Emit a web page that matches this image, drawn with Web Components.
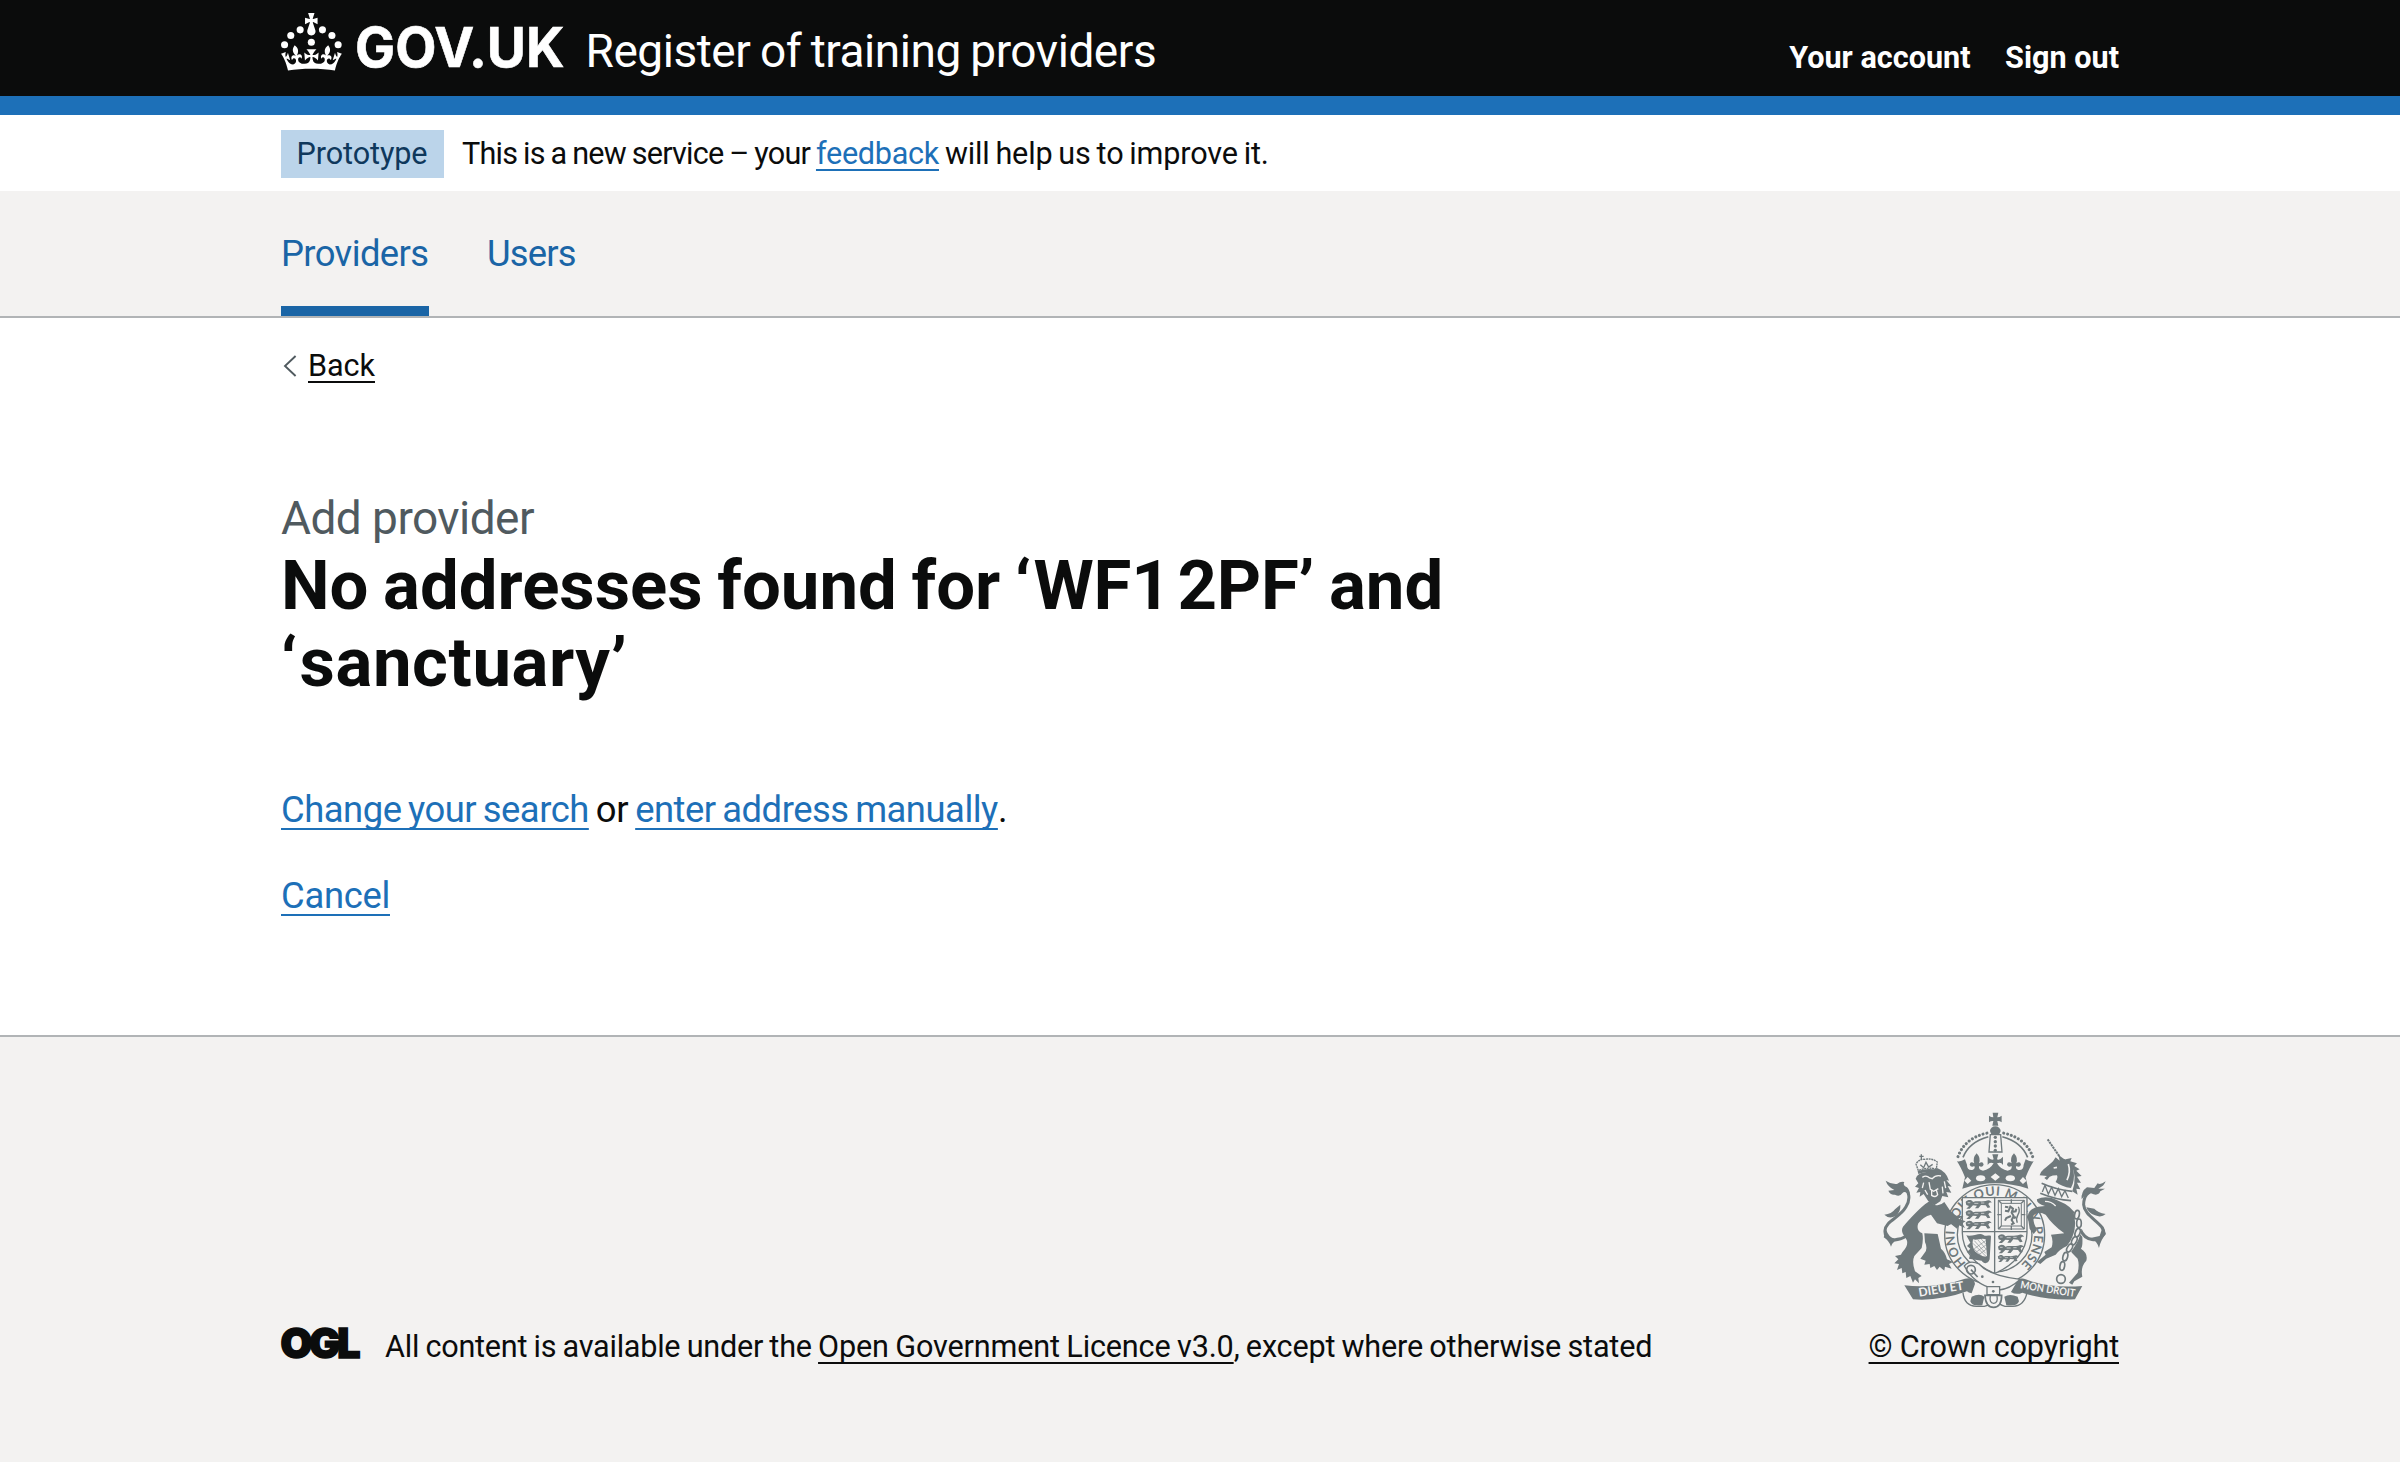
<!DOCTYPE html>
<html lang="en">
<head>
<meta charset="utf-8">
<title>No addresses found - Register of training providers - GOV.UK</title>
<style>
  html { background: #f3f2f1; }
  body { margin: 0; background: #fff; color: #0b0c0c; font-family: Roboto, "Liberation Sans", sans-serif; font-size: 36.4px; line-height: 48px; }
</style>
</head>
<body>
<app-page></app-page>
<script>
const base = `
  * { box-sizing: border-box; }
  .width { width: 1838px; margin: 0 auto; }
  a { color: inherit; text-decoration: underline; text-decoration-thickness: 2px; text-underline-offset: 5px; text-decoration-skip-ink: none; }
  span, a { white-space: pre; }
`;
function define(name, css, html) {
  const template = document.createElement('template');
  template.innerHTML = `<style>${base}${css}</style>${html}`;
  customElements.define(name, class extends HTMLElement {
    constructor() {
      super();
      this.attachShadow({ mode: 'open' }).append(template.content.cloneNode(true));
    }
  });
}

define('govuk-logo', `
  :host { display: block; width: 285px; height: 58px; }
  svg { display: block; overflow: visible; }
  text { font: 700 55px Inter, "Liberation Sans", sans-serif; }
`, `
<svg width="285" height="57.4" viewBox="0 0 285 57.4" fill="#fff">
  <g transform="scale(.957)">
    <circle cx="20" cy="17.6" r="3.7"/><circle cx="10.2" cy="23.5" r="3.7"/><circle cx="3.7" cy="33.2" r="3.7"/>
    <circle cx="31.7" cy="30.6" r="3.7"/><circle cx="43.3" cy="17.6" r="3.7"/><circle cx="53.2" cy="23.5" r="3.7"/><circle cx="59.7" cy="33.2" r="3.7"/>
    <path d="M33.1,9.8c.2-.1.3-.3.5-.5l4.6,2.4v-6.8l-4.6,1.5c-.1-.2-.3-.3-.5-.5l1.9-5.9h-6.7l1.9,5.9c-.2.1-.3.3-.5.5l-4.6-1.5v6.8l4.6-2.4c.1.2.3.3.5.5l-2.6,8c-.9,2.8,1.2,5.7,4.1,5.7h0c3,0,5.1-2.9,4.1-5.7l-2.6-8ZM37,37.9s-3.4,3.8-4.1,6.1c2.2,0,4.2-.5,6.4-2.8l-.7,8.5c-2-2.8-4.4-4.1-5.7-3.8.1,3.1.5,6.7,5.8,7.2,3.7.3,6.7-1.5,7-3.8.4-2.6-2-4.3-3.7-1.6-1.4-4.5,2.4-6.1,4.9-3.2-1.9-4.5-1.8-7.7,2.4-10.9,3,4,2.6,7.3-1.2,11.1,2.4-1.3,6.2,0,4,4.6-1.2-2.8-3.7-2.2-4.2.2-.3,1.7.7,3.7,3,4.2,1.9.3,4.7-.9,7-5.9-1.3,0-2.4.7-3.9,1.7l2.4-8c.6,2.3,1.4,3.7,2.2,4.5.6-1.6.5-2.8,0-5.3l5,1.8c-2.6,3.6-5.2,8.7-7.3,17.5-7.4-1.1-15.7-1.7-24.5-1.7h0c-8.8,0-17.1.6-24.5,1.7-2.1-8.9-4.7-13.9-7.3-17.5l5-1.8c-.5,2.5-.6,3.7,0,5.3.8-.8,1.6-2.3,2.2-4.5l2.4,8c-1.5-1-2.6-1.7-3.9-1.7,2.3,5,5.2,6.2,7,5.9,2.3-.4,3.3-2.4,3-4.2-.5-2.4-3-3.1-4.2-.2-2.2-4.6,1.6-6,4-4.6-3.7-3.7-4.2-7.1-1.2-11.1,4.2,3.2,4.3,6.4,2.4,10.9,2.5-2.8,6.3-1.3,4.9,3.2-1.8-2.7-4.1-1-3.7,1.6.3,2.3,3.3,4.1,7,3.8,5.4-.5,5.7-4.2,5.8-7.2-1.3-.2-3.7,1-5.7,3.8l-.7-8.5c2.2,2.3,4.2,2.7,6.4,2.8-.7-2.3-4.1-6.1-4.1-6.1h10.6,0Z"/>
  </g>
  <text x="74" y="53.6" textLength="209.5" lengthAdjust="spacingAndGlyphs" stroke="#fff" stroke-width=".6">GOV.UK</text>
</svg>`);

define('app-header', `
  :host { display: block; height: 115px; background: #0b0c0c; border-bottom: 19px solid #1d70b8; color: #fff; }
  .width { display: flex; align-items: flex-start; }
  govuk-logo { margin-top: 13px; }
  .service { margin: 23px auto 0 19.5px; font-size: 46px; line-height: 57px; letter-spacing: -.45px; word-spacing: -1.5px; }
  nav { display: flex; gap: 34.5px; margin-top: 38px; font-weight: 700; font-size: 30.6px; line-height: 40px; letter-spacing: 0; }
`, `
<div class="width">
  <govuk-logo></govuk-logo>
  <span class="service">Register of training providers</span>
  <nav><span>Your account</span><span>Sign out</span></nav>
</div>`);

define('phase-banner', `
  :host { display: block; height: 76px; padding-top: 15px; font-size: 30.6px; line-height: 40px; }
  .width { display: flex; align-items: flex-start; }
  .tag { width: 162.5px; height: 48px; padding: 4px 0 0 15.5px; background: #bbd4ea; color: #0f385c; letter-spacing: -.1px; }
  p { margin: 4px 0 0 18.5px; }
  a { color: #1d70b8; letter-spacing: -.29px; }
`, `
<div class="width"><span class="tag">Prototype</span>
<p><span style="letter-spacing:-.78px;word-spacing:-1px">This is a new service – your </span><a>feedback</a><span style="letter-spacing:-.17px;word-spacing:-1.5px"> will help us to improve it.</span></p></div>`);

define('service-nav', `
  :host { display: block; height: 127px; background: #f3f2f1; border-bottom: 2px solid #b1b4b6; color: #1a65a6; }
  .width { display: flex; gap: 58px; height: 125px; }
  span { padding-top: 39px; height: 125px; letter-spacing: -.6px; }
  .current { width: 148px; border-bottom: 10px solid #1a65a6; }
`, `<div class="width"><span class="current">Providers</span><span style="letter-spacing:-.8px">Users</span></div>`);

define('back-link', `
  :host { display: flex; align-items: center; height: 40px; font-size: 30.6px; line-height: 40px; letter-spacing: -.06px; }
  svg { display: block; margin: 0 11px 0 2px; }
`, `<svg width="14" height="22" viewBox="0 0 14 22"><path d="M12.6 1 2 11 12.6 21" fill="none" stroke="#505a5f" stroke-width="1.9"/></svg><a>Back</a>`);

define('page-content', `
  :host { display: block; height: 717px; padding-top: 28px; }
  back-link { margin-bottom: 104px; }
  .caption { display: block; color: #505a5f; font-size: 46px; line-height: 57px; letter-spacing: -.55px; }
  h1 { margin: 0 0 85px; font-size: 68.9px; line-height: 77px; font-weight: 700; letter-spacing: 0; word-spacing: -2.5px; }
  .open { letter-spacing: 2.5px; }
  .gap { letter-spacing: -.2px; word-spacing: -10px; }
  p { margin: 0 0 38px; }
  p a { color: #1d70b8; text-underline-offset: 6px; letter-spacing: -.48px; word-spacing: -2px; }
`, `
<div class="width">
  <back-link></back-link>
  <span class="caption">Add provider</span>
  <h1>No addresses found for <span class="open">‘</span><span class="gap">WF1 2PF</span>’ and<br><span class="open">‘</span><span style="letter-spacing:.55px">sanctuary’</span></h1>
  <p><a>Change your search</a><span style="letter-spacing:-.35px;word-spacing:-1.7px"> or </span><a>enter address manually</a>.</p>
  <p><a style="letter-spacing:-.3px">Cancel</a></p>
</div>`);

define('ogl-logo', `
  :host { display: block; width: 79px; height: 33px; }
  svg { display: block; overflow: visible; }
  text { font: 900 41px Inter, "Liberation Sans", sans-serif; }
`, `<svg width="79" height="33" viewBox="0 0 79 33"><text x="-0.5" y="31" textLength="80" lengthAdjust="spacing" fill="#0b0c0c" stroke="#0b0c0c" stroke-width="1.6">OGL</text></svg>`);

define('royal-arms', `
  :host { display: block; width: 223.3px; height: 196.7px; }
  svg { display: block; }
  text { font-family: Lato, "Liberation Sans", sans-serif; }
`, `
<svg width="223.3" height="196.7" viewBox="100 38 670 590" fill="#6f797c" stroke="none">
  <defs>
    <path id="garter" d="M350 492 A119 119 0 1 1 518 492"/>
    <g id="passant">
      <path d="M2 6 C8-2 20-2 24 6 C36 2 50 6 62 3 C72-2 78 2 80 8 C74 6 72 8 70 12 L76 22 L68 24 L62 16 L48 15 L40 25 L30 25 L36 17 L24 16 L14 26 L4 26 L12 18 L4 15 Z"/>
      <path d="M8 8h8M28 10h12M48 9h10" stroke="#f3f2f1" stroke-width="2"/>
    </g>
    <g id="link"><ellipse rx="7" ry="13" fill="none" stroke="#6f797c" stroke-width="5"/></g>
  </defs>

  <!-- garter and shield -->
  <circle cx="435" cy="406" r="150" fill="#f3f2f1" stroke="#6f797c" stroke-width="4"/>
  <circle cx="435" cy="406" r="112" fill="none" stroke="#6f797c" stroke-width="4"/>
  <text font-size="38" font-weight="700"><textPath href="#garter" textLength="566" lengthAdjust="spacing">HONI SOIT QUI MAL Y PENSE</textPath></text>
  <path d="M338 295H532V400C532 455 490 500 435 522C380 500 338 455 338 400Z" fill="#f3f2f1" stroke="#6f797c" stroke-width="4"/>
  <path d="M433 295h4v227h-4zM338 395h194v4H338z"/>
  <use href="#passant" x="346" y="302"/><use href="#passant" x="346" y="333"/><use href="#passant" x="346" y="364"/>
  <g transform="translate(443 405)"><use href="#passant"/><use href="#passant" y="31"/><use href="#passant" transform="translate(0 62) scale(.8)"/></g>
  <path d="M446 303h78v86h-78zM455 312h60v68h-60z" fill="none" stroke="#6f797c" stroke-width="3"/>
  <path d="M446 303l9 9M524 303l-9 9M446 389l9-9M524 389l-9-9M485 300v12M485 380v12M443 346h12M515 346h12" stroke="#6f797c" stroke-width="4"/>
  <path d="M466 322l10 2M466 334l10 2 6-14 8 6-4 12 6 10-6 12 6 10-8 4M484 350l-14 6-4 8M486 338l12-2 2-8M492 356l8-2" fill="none" stroke="#6f797c" stroke-width="6"/>
  <path d="M506 322q6 12-1 24t-2 24" fill="none" stroke="#6f797c" stroke-width="4"/>
  <path d="M350 408C366 414 390 398 400 406C410 414 424 404 424 412L420 480C415 495 402 494 396 484L358 478L362 464L352 458L362 448L352 440L362 430Z"/>
  <path d="M370 420C384 424 396 414 408 420L412 470C400 476 388 466 376 456C368 444 368 432 370 420Z" fill="#f3f2f1"/>
  <path d="M374 424l34 38M384 421l26 29M394 418l16 18M370 432l38 38M372 448l26 24M408 424l-34 24M410 436l-30 22M412 448l-24 18" stroke="#6f797c" stroke-width="1.6"/>

  <!-- crown over the shield -->
  <path d="M429 40h17l-3 14q7 0 13-5v20q-6-5-13-4l3 14h-18l3-14q-7-1-13 4V49q6 5 13 5z"/>
  <path d="M421 95a16 14 0 0 1 32 0l-4 10h-24z"/>
  <path d="M422 106h31l4 52h-39z" fill="#f3f2f1" stroke="#6f797c" stroke-width="4"/>
  <g fill="#6f797c"><circle cx="437" cy="114" r="5"/><circle cx="437" cy="127" r="5"/><circle cx="437" cy="140" r="5"/><circle cx="437" cy="153" r="5"/></g>
  <path d="M325 172Q345 116 413 101M549 172Q529 116 461 101" fill="none" stroke="#6f797c" stroke-width="9" stroke-linecap="round" stroke-dasharray=".1 11.6"/>
  <path d="M340 174Q358 128 416 112M534 174Q516 128 458 112" fill="none" stroke="#6f797c" stroke-width="5"/>
  <path d="M322 186Q334 188 346 180L352 196Q352 214 368 212Q378 208 374 200Q364 206 360 196Q362 184 374 192Q368 176 381 162Q394 176 388 192Q400 184 402 196Q398 206 388 200Q386 212 400 214Q420 212 432 192Q420 186 414 197V172Q424 184 432 180L428 165H446L442 180Q450 184 460 172V197Q454 186 442 192Q454 212 474 214Q488 212 486 200Q476 206 472 196Q474 184 486 192Q480 176 493 162Q506 176 500 192Q512 184 514 196Q510 206 500 200Q496 208 506 212Q522 214 522 196L528 180Q540 188 552 186Q540 204 528 234L536 268Q437 235 338 268L346 234Q334 204 322 186Z"/>
  <g fill="#f3f2f1"><ellipse cx="393" cy="237" rx="14" ry="9"/><ellipse cx="482" cy="237" rx="14" ry="9"/><path d="M437 222l14 11-14 11-14-11zM354 233l11 11-11 10-10-10zM520 233l11 11-11 10-10-10z"/></g>

  <!-- lion -->
  <path d="M204 216Q230 204 262 212L254 220Q230 214 206 224Z"/>
  <path d="M206 214L199 194Q208 178 226 180Q248 176 263 188L260 209Q232 202 206 214Z" fill="none" stroke="#6f797c" stroke-width="4" stroke-dasharray="6 2"/>
  <path d="M215 165v16M209 171h13M212 196l10 9 7-16 8 14 12-8" fill="none" stroke="#6f797c" stroke-width="4"/>
  <path d="M198 238Q206 216 236 218L262 206Q290 216 298 244L290 242L306 262L294 260L305 280L290 278L296 294L278 290L272 306L254 318L236 306L222 284L210 292L212 278L200 280L208 266L196 262L206 252Z"/>
  <path d="M218 234q12-8 22 2l8 2q10-12 26-8M238 248l4 22 10 6 14-8M246 270v18q12 8 18-2l-4-14M222 250l-4 16M284 246l4 20M278 262l2 20M226 272l8 14" fill="none" stroke="#f3f2f1" stroke-width="4"/>
  <path d="M240 306Q216 318 160 382C150 400 168 412 172 424C176 444 160 452 154 466L136 470L146 480L134 492L148 494L142 512L156 506L158 522L168 518L170 536L182 530L190 550L196 540L208 552L206 536L216 530L196 516Q186 488 194 470L216 446Q222 420 218 402Q198 392 206 372Q220 352 244 346L262 372L294 380L304 374L322 388L328 378L346 386L338 372L348 366L326 358L342 350L320 350L300 332L284 308Q270 322 254 316Z"/>
  <path d="M224 402L264 404Q270 430 274 448Q288 460 292 480L310 488L298 494L306 508L286 502L284 514L270 502L262 512L254 500L242 506L240 494L224 496L228 484L212 478L224 462Q236 450 226 428Z"/>
  <path d="M170 410C136 432 104 420 106 394C108 364 150 356 168 324C184 300 180 272 158 264" fill="none" stroke="#6f797c" stroke-width="9"/>
  <path d="M108 244Q126 256 142 254Q154 244 164 248Q158 258 172 264Q182 274 180 288Q166 272 158 282Q150 294 136 286Q122 288 116 274L134 272Q114 262 108 244ZM152 316Q154 336 138 350Q118 360 104 346Q126 344 136 330ZM124 442Q118 424 102 414L110 392Q116 412 134 418Q148 412 156 416Q130 422 124 442Z"/>

  <!-- unicorn -->
  <path d="M594 120L630 172" stroke="#6f797c" stroke-width="6" stroke-dasharray="7 2"/>
  <path d="M582 210Q602 194 610 186L618 174L630 184L626 166L642 178Q668 182 672 214Q676 244 664 266Q636 262 618 248Q626 234 622 228Q608 228 600 232L592 242L584 236L592 230L570 228Q572 218 582 210Z"/>
  <path d="M612 206l10-2M656 194q8 24-4 48" stroke="#f3f2f1" fill="none" stroke-width="5"/>
  <path d="M648 180L666 176L662 186L682 192L674 200L690 210L680 214L696 230L682 232L694 250L682 250L692 270L680 268L684 286L668 276Q684 230 664 196Z"/>
  <path d="M576 252Q620 272 668 276M572 282Q620 302 664 304" fill="none" stroke="#6f797c" stroke-width="5"/>
  <path d="M578 278l8-20 10 26 10-20 10 24 10-20 10 24 10-18 10 22" fill="none" stroke="#6f797c" stroke-width="4"/>
  <path d="M562 300Q590 286 626 304Q668 320 682 352Q690 376 684 396L698 412Q700 440 694 448Q716 462 710 484Q692 502 698 532L674 546L668 556L658 550L684 520Q690 496 684 478Q666 462 652 440Q630 450 618 466L590 478L572 494L562 488L588 466L584 458L606 444Q612 424 604 406L644 402Q608 376 588 346Q566 334 552 348Q550 362 554 374L562 392L552 404L540 388L534 350Q538 328 566 322L586 320Q560 312 562 300Z"/>
  <path d="M586 306Q606 306 618 320" fill="none" stroke="#f3f2f1" stroke-width="4"/>
  <path d="M692 390C706 426 748 430 762 404C768 372 704 354 702 316C702 286 718 278 732 270" fill="none" stroke="#6f797c" stroke-width="9"/>
  <path d="M768 246Q752 258 744 252L734 266L712 264Q694 276 696 300Q708 282 724 282Q746 292 752 276L766 268L746 268Q764 260 768 246ZM710 324Q716 342 736 348Q756 356 768 344Q744 340 734 328ZM760 380L769 404Q754 420 748 446Q742 424 722 416L750 410Z"/>
  <path d="M682 340Q696 396 664 440T636 506" fill="none" stroke="#f3f2f1" stroke-width="20"/>
  <g><use href="#link" transform="translate(682 346) rotate(10)"/><use href="#link" transform="translate(688 372)"/><use href="#link" transform="translate(684 400) rotate(20)"/><use href="#link" transform="translate(674 424) rotate(25)"/><use href="#link" transform="translate(660 446) rotate(30)"/><use href="#link" transform="translate(647 472) rotate(15)"/><use href="#link" transform="translate(638 500) rotate(10)"/></g>
  <circle cx="634" cy="539" r="13" fill="none" stroke="#6f797c" stroke-width="5"/>

  <!-- motto ribbon -->
  <path d="M164 558Q260 568 346 538Q374 532 376 554L366 582Q356 580 352 576Q270 606 190 600Z"/>
  <path d="M698 560Q600 568 528 540Q508 532 498 554L484 578Q500 588 518 580Q590 604 676 600Z"/>
  <g fill="#f3f2f1" font-size="36" font-weight="700">
    <text transform="translate(209 592) rotate(-9)" textLength="136" lengthAdjust="spacingAndGlyphs">DIEU ET</text>
    <text transform="translate(511 567) rotate(9)" textLength="166" lengthAdjust="spacingAndGlyphs" font-size="32">MON DROIT</text>
  </g>
  <path d="M340 580Q344 620 380 621H404Q424 618 430 600M532 580Q524 620 490 621H466Q448 618 442 600" fill="none" stroke="#6f797c" stroke-width="4"/>
  <path d="M366 592Q390 580 404 592L398 618Q366 622 362 606ZM504 592Q480 582 464 592L470 618Q504 622 508 606Z"/>

  <!-- belt and buckle -->
  <path d="M344 500Q360 480 388 494Q420 530 512 540Q480 570 448 572Q376 560 344 500Z" fill="#f3f2f1" stroke="#6f797c" stroke-width="4"/>
  <circle cx="364" cy="511" r="13" fill="none" stroke="#6f797c" stroke-width="5"/>
  <path d="M364 511l20 22" stroke="#6f797c" stroke-width="5"/>
  <circle cx="398" cy="532" r="4"/><circle cx="430" cy="548" r="4"/>
  <path d="M412 562h38v24H412z" fill="#f3f2f1" stroke="#6f797c" stroke-width="4"/>
  <circle cx="431" cy="576" r="4"/>
  <path d="M406 588h50Q456 624 432 624Q408 624 406 588Z" fill="#f3f2f1" stroke="#6f797c" stroke-width="5"/>
  <path d="M422 590q-4 20 10 22q14-2 10-22" fill="none" stroke="#6f797c" stroke-width="4"/>
</svg>`);

define('app-footer', `
  :host { display: block; height: 427px; background: #f3f2f1; border-top: 2px solid #b1b4b6; padding-top: 75px; font-size: 30.6px; line-height: 40px; }
  .width { display: flex; align-items: flex-end; }
  ogl-logo { margin-bottom: 7px; }
  .licence { margin: 0 auto 0 25px; }
  .copyright { display: flex; flex-direction: column; align-items: flex-end; }
  royal-arms { margin: 0 12.7px 18px 0; }
`, `
<div class="width">
  <ogl-logo></ogl-logo>
  <div class="licence"><span style="letter-spacing:-.25px;word-spacing:-1px">All content is available under the </span><a style="letter-spacing:-.15px;word-spacing:-1px">Open Government Licence v3.0</a><span style="letter-spacing:-.2px;word-spacing:-1px">, except where otherwise stated</span></div>
  <div class="copyright"><royal-arms></royal-arms><a style="letter-spacing:-.17px">© Crown copyright</a></div>
</div>`);

define('app-page', `:host { display: block; }`, `
<app-header></app-header><phase-banner></phase-banner><service-nav></service-nav><page-content></page-content><app-footer></app-footer>`);
</script>
</body>
</html>
